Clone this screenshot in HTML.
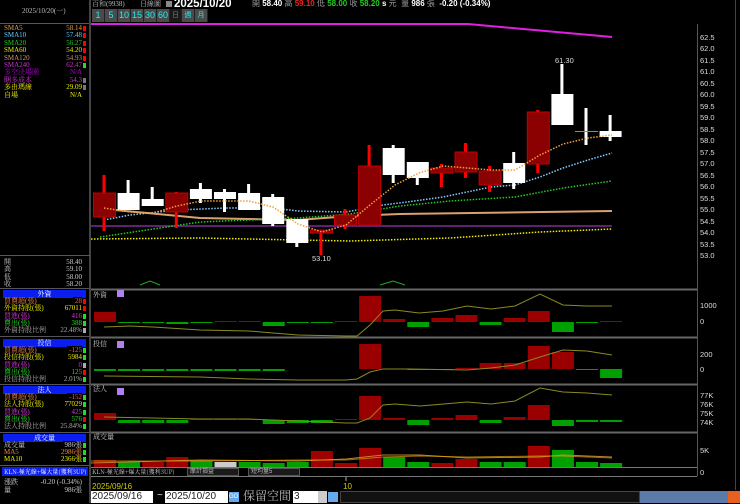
<!DOCTYPE html>
<html><head><meta charset="utf-8"><style>
*{margin:0;padding:0;box-sizing:border-box}
body{width:740px;height:503px;background:#000;overflow:hidden;position:relative;font-family:"Liberation Sans","Noto Sans CJK TC",sans-serif;font-size:8px;color:#ddd}
.a{position:absolute;white-space:nowrap;line-height:1}
.s{font-family:"Liberation Serif","Noto Serif CJK SC",serif;font-size:8px}
.hd{position:absolute;left:3px;width:83px;height:8px;background:#0a1ef0;color:#fff;text-align:center;font-size:7px;line-height:8px;font-family:"Noto Serif CJK SC",serif;overflow:hidden}
.row{position:absolute;left:4px;width:82px;height:8px;font-size:7px;line-height:8px;font-family:"Liberation Serif","Noto Serif CJK SC",serif;overflow:hidden}
.row b{font-weight:normal;position:absolute;right:4px;background:#000;padding-left:2px}
.row i{font-style:normal;position:absolute;right:0;width:3px;height:5px;top:2px}
.btn{position:absolute;top:9px;height:13px;background:#4a4a4a;color:#2ee;font-size:9px;text-align:center;line-height:13px;border-right:1px solid #222}
</style></head><body>
<div class="a s" style="left:22px;top:8px;color:#bbb;font-size:7px">2025/10/20(一)</div>
<div class="a" style="left:0;top:23px;width:90px;height:1px;background:#555"></div>
<div class="a" style="left:89px;top:0;width:2px;height:503px;background:#444"></div>
<div class="row" style="top:24px;color:#e8a040">SMA5<b>58.14</b><i style="background:#f00"></i></div>
<div class="row" style="top:31px;color:#6cf">SMA10<b>57.48</b><i style="background:#f00"></i></div>
<div class="row" style="top:39px;color:#2c2">SMA20<b>56.27</b><i style="background:#f00"></i></div>
<div class="row" style="top:46px;color:#ee0">SMA60<b>54.20</b><i style="background:#f00"></i></div>
<div class="row" style="top:54px;color:#c96">SMA120<b>54.93</b><i style="background:#f00"></i></div>
<div class="row" style="top:61px;color:#c3c">SMA240<b>62.47</b><i style="background:#2d2"></i></div>
<div class="row" style="top:68px;color:#a0c">多空決場園<b>N/A</b></div>
<div class="row" style="top:76px;color:#c3c">睏多成本<b>54.3</b><i style="background:#777"></i></div>
<div class="row" style="top:83px;color:#ee0">多由瑪線<b>29.09</b><i style="background:#777"></i></div>
<div class="row" style="top:91px;color:#ee0">自場<b>N/A</b></div>
<div class="a" style="left:0;top:255px;width:90px;height:1px;background:#555"></div>
<div class="row" style="top:258px;color:#ccc">開<b>58.40</b></div>
<div class="row" style="top:265px;color:#ccc">高<b>59.10</b></div>
<div class="row" style="top:273px;color:#ccc">低<b>58.00</b></div>
<div class="row" style="top:280px;color:#ccc">收<b>58.20</b></div>
<div class="a" style="left:0;top:288px;width:90px;height:1px;background:#555"></div>
<div class="hd" style="top:290px">外資</div>
<div class="row" style="top:297px;color:#e84">買賣超(張)<b style="color:#f55">28</b><i style="background:#f00"></i></div>
<div class="row" style="top:304px;color:#ee0">外資持股(張)<b>67011</b><i style="background:#f00"></i></div>
<div class="row" style="top:312px;color:#d3d">買進(張)<b>416</b><i style="background:#2d2"></i></div>
<div class="row" style="top:319px;color:#2d2">賣出(張)<b>388</b><i style="background:#2d2"></i></div>
<div class="row" style="top:326px;color:#aaa">外資持股比例<b>22.48%</b><i style="background:#aaa"></i></div>
<div class="a" style="left:0;top:336px;width:90px;height:1px;background:#555"></div>
<div class="hd" style="top:339px">投信</div>
<div class="row" style="top:346px;color:#e84">買賣超(張)<b style="color:#f55">-125</b><i style="background:#2d2"></i></div>
<div class="row" style="top:353px;color:#ee0">投信持股(張)<b>5984</b><i style="background:#2d2"></i></div>
<div class="row" style="top:361px;color:#d3d">買進(張)<b>0</b><i style="background:#aaa"></i></div>
<div class="row" style="top:368px;color:#2d2">賣出(張)<b>125</b><i style="background:#f00"></i></div>
<div class="row" style="top:375px;color:#aaa">投信持股比例<b>2.01%</b><i style="background:#2d2"></i></div>
<div class="a" style="left:0;top:384px;width:90px;height:1px;background:#555"></div>
<div class="hd" style="top:386px">法人</div>
<div class="row" style="top:393px;color:#e84">買賣超(張)<b style="color:#f55">-152</b><i style="background:#2d2"></i></div>
<div class="row" style="top:400px;color:#ee0">法人持股(張)<b>77029</b><i style="background:#2d2"></i></div>
<div class="row" style="top:408px;color:#d3d">買進(張)<b>425</b><i style="background:#2d2"></i></div>
<div class="row" style="top:415px;color:#2d2">賣出(張)<b>576</b><i style="background:#f00"></i></div>
<div class="row" style="top:422px;color:#aaa">法人持股比例<b>25.84%</b><i style="background:#2d2"></i></div>
<div class="a" style="left:0;top:432px;width:90px;height:1px;background:#555"></div>
<div class="hd" style="top:434px">成交量</div>
<div class="row" style="top:441px;color:#ccc">成交量<b>986張</b><i style="background:#2d2"></i></div>
<div class="row" style="top:448px;color:#e84">MA5<b style="color:#e84">2986張</b><i style="background:#2d2"></i></div>
<div class="row" style="top:455px;color:#ee0">MA10<b style="color:#ee0">2366張</b><i style="background:#2d2"></i></div>
<div class="a" style="left:0;top:465px;width:90px;height:1px;background:#555"></div>
<div class="a" style="left:2px;top:467px;width:86px;height:9px;background:#0a1ef0;color:#fff;font-size:6px;line-height:9px;font-family:'Noto Serif CJK SC',serif;padding-left:2px;overflow:hidden">KLN-極光線+爆大量(獲利3UP)</div>
<div class="row" style="top:478px;color:#ccc">漲跌<b>-0.20 (-0.34%)</b></div>
<div class="row" style="top:486px;color:#ccc">量<b>986張</b></div>

<div class="a s" style="left:92px;top:1px;color:#bbb;font-size:7px">百和(9938)</div>
<div class="a s" style="left:140px;top:1px;color:#bbb;font-size:7px">日線圖</div>
<div class="a" style="left:166px;top:1px;width:6px;height:6px;background:#888"></div>
<div class="a" style="left:174px;top:-1px;color:#fff;font-weight:bold;font-size:11.5px">2025/10/20</div>
<div class="a" style="left:252px;top:0;font-size:8px;font-weight:bold;color:#fff"><span style="color:#999;font-weight:normal">開</span> 58.40 <span style="color:#999;font-weight:normal">高</span> <span style="color:#e22">59.10</span> <span style="color:#999;font-weight:normal">低</span> <span style="color:#2c2">58.00</span> <span style="color:#999;font-weight:normal">收</span> <span style="color:#2c2">58.20</span> s <span style="color:#999;font-weight:normal">元 &nbsp;量</span> 986 <span style="color:#999;font-weight:normal">張</span> &nbsp;-0.20 (-0.34%)</div>
<div class="btn" style="left:92px;width:13px">1</div>
<div class="btn" style="left:105px;width:13px">5</div>
<div class="btn" style="left:118px;width:13px">10</div>
<div class="btn" style="left:131px;width:13px">15</div>
<div class="btn" style="left:144px;width:13px">30</div>
<div class="btn" style="left:157px;width:13px">60</div>
<div class="btn" style="left:170px;width:12px;background:#1a1a1a;color:#777;font-size:7px">日</div>
<div class="btn" style="left:182px;width:13px;font-size:7px">週</div>
<div class="btn" style="left:195px;width:13px;font-size:7px">月</div>

<svg class="a" style="left:0;top:0" width="740" height="503" id="sv">
<g stroke="#555" stroke-width="1" fill="none">
<line x1="697.5" y1="24" x2="697.5" y2="476"/>
<line x1="91" y1="289.5" x2="697" y2="289.5" stroke="#666" stroke-width="2"/>
<line x1="91" y1="337.5" x2="697" y2="337.5" stroke="#666" stroke-width="2"/>
<line x1="91" y1="384.5" x2="697" y2="384.5" stroke="#666" stroke-width="2"/>
<line x1="91" y1="432.5" x2="697" y2="432.5" stroke="#666" stroke-width="2"/>
<line x1="91" y1="467.5" x2="697" y2="467.5" stroke="#777"/>
<line x1="91" y1="476.5" x2="697" y2="476.5" stroke="#777"/>
</g>
<line x1="735.5" y1="0" x2="735.5" y2="490" stroke="#444"/>
<g font-size="7.5" fill="#ddd" font-family="Liberation Sans,sans-serif">
<text x="700" y="40">62.5</text><text x="700" y="51">62.0</text><text x="700" y="63">61.5</text><text x="700" y="74">61.0</text><text x="700" y="86">60.5</text><text x="700" y="97">60.0</text><text x="700" y="109">59.5</text><text x="700" y="120">59.0</text><text x="700" y="132">58.5</text><text x="700" y="143">58.0</text><text x="700" y="155">57.5</text><text x="700" y="166">57.0</text><text x="700" y="178">56.5</text><text x="700" y="189">56.0</text><text x="700" y="201">55.5</text><text x="700" y="212">55.0</text><text x="700" y="224">54.5</text><text x="700" y="235">54.0</text><text x="700" y="247">53.5</text><text x="700" y="258">53.0</text>
<text x="700" y="308">1000</text><text x="700" y="324">0</text>
<text x="700" y="357">200</text><text x="700" y="372">0</text>
<text x="700" y="398">77K</text><text x="700" y="407">76K</text><text x="700" y="416">75K</text><text x="700" y="425">74K</text>
<text x="700" y="453">5K</text><text x="700" y="475">0</text>
<text x="555" y="63">61.30</text>
<text x="312" y="261">53.10</text>
</g>
<g font-size="7" fill="#ccc" font-family="Noto Serif CJK SC,serif">
<text x="93" y="297">外資</text><text x="93" y="346">投信</text><text x="93" y="391">法人</text><text x="93" y="439">成交量</text>
</g>
<rect x="117" y="290" width="7" height="7" fill="#b080f0"/><rect x="117" y="341" width="7" height="7" fill="#b080f0"/><rect x="117" y="388" width="7" height="7" fill="#b080f0"/>
<polyline points="91,24 468,24 612,37" stroke="#e020e0" stroke-width="2" fill="none"/>
<line x1="91" y1="226" x2="612" y2="226" stroke="#602070" stroke-width="2"/>
<polyline points="91,239 200,238 298,240 350,241 450,238 540,232 612,229" stroke="#ee0" stroke-width="1.5" stroke-dasharray="1.5,1.5" fill="none"/>
<polyline points="104,209 200,218 298,220 350,216 400,214 612,211" stroke="#d9a070" stroke-width="2" fill="none"/>
<polyline points="100,237 200,222 298,218 350,214 400,206 450,201 515,197 563,188 612,181" stroke="#2c2" stroke-width="1.5" stroke-dasharray="1.5,1.5" fill="none"/>
<polyline points="104,220 130,215 177,210 225,208 273,208 298,211 346,212 383,205 407,202 443,197 491,187 515,185 540,177 563,168 588,160 612,153" stroke="#8cf" stroke-width="1.5" stroke-dasharray="1.5,1.5" fill="none"/>
<g id="cd"></g>
<polyline points="104,208 130,212 153,213 177,206 201,201 225,201 249,201 273,207 298,224 322,232 346,225 370,205 395,185 419,173 443,166 467,168 491,170 515,170 540,155 563,144 588,138 612,135" stroke="#f0a040" stroke-width="1.5" stroke-dasharray="1.5,1.5" fill="none"/>
<polyline points="140,285 150,281 160,285" stroke="#2a2" fill="none"/><polyline points="380,285 393,281 405,285" stroke="#2a2" fill="none"/>
<g id="bars"></g>
<polyline points="104,327 130,326 153,327 200,330 249,331 273,333 298,335 346,336 357,336 370,325 383,311 395,310 419,313 443,311 467,306 491,309 515,306 540,294 563,305 587,306 612,306" stroke="#8a8a20" fill="none"/>
<polyline points="104,376 200,377 249,379 298,380 346,380 357,379 370,372 383,369 410,369 467,370 491,368 515,365 540,357 563,350 587,351 612,355" stroke="#8a8a20" fill="none"/>
<polyline points="104,417 153,418 200,419 249,419 298,421 346,423 357,423 370,418 383,405 395,404 420,406 467,402 491,404 515,401 540,388 563,392 587,393 612,395" stroke="#8a8a20" fill="none"/>
<polyline points="91,463 200,460 298,461 346,459 383,455 420,455 467,458 540,457 563,455 612,457" stroke="#c08030" fill="none"/>
<polyline points="91,461 200,461 298,460 346,460 383,457 420,456 467,457 540,456 563,456 612,458" stroke="#e0a000" fill="none" opacity=".7"/>
<line x1="346" y1="477" x2="346" y2="481" stroke="#aaa"/>
<text x="92" y="489" font-size="8" fill="#cc0">2025/09/16</text><text x="343" y="489" font-size="8" fill="#cc0">10</text>
</svg>
<div class="a" style="left:92px;top:468px;width:92px;height:8px;color:#ccc;font-size:6px;line-height:8px;font-family:'Noto Serif CJK SC',serif;overflow:hidden">KLN-極光線+爆大量(獲利3UP)</div>
<div class="a" style="left:187px;top:468px;width:52px;height:8px;background:#1a1a1a;border:1px solid #555;color:#bbb;font-size:6px;padding-left:2px">摩計損益</div>
<div class="a" style="left:248px;top:468px;width:52px;height:8px;background:#1a1a1a;border:1px solid #555;color:#bbb;font-size:6px;padding-left:2px">短均量5</div>
<div class="a" style="left:91px;top:491px;width:62px;height:12px;background:#fff;color:#222;font-size:10px;line-height:12px;padding-left:1px">2025/09/16</div>
<div class="a" style="left:157px;top:491px;color:#ddd;font-size:10px">~</div>
<div class="a" style="left:165px;top:491px;width:63px;height:12px;background:#fff;color:#222;font-size:10px;line-height:12px;padding-left:1px">2025/10/20</div>
<div class="a" style="left:229px;top:492px;width:10px;height:10px;background:#6ae;color:#fff;font-size:6px;line-height:10px">GO</div>
<div class="a" style="left:243px;top:490px;color:#bbb;font-size:12px;font-family:'Noto Serif CJK SC',serif">保留空間</div>
<div class="a" style="left:293px;top:491px;width:25px;height:12px;background:#fff;color:#222;font-size:10px;line-height:12px;padding-left:1px">3</div>
<div class="a" style="left:318px;top:491px;width:9px;height:12px;background:#ccc"></div>
<div class="a" style="left:328px;top:492px;width:10px;height:10px;background:#6ae"></div>
<div class="a" style="left:340px;top:491px;width:300px;height:12px;background:#111;border:1px solid #444"></div>
<div class="a" style="left:640px;top:491px;width:100px;height:12px;background:#5a7aa8"></div>
<div class="a" style="left:728px;top:491px;width:12px;height:12px;background:#e86020"></div>
<script>
var ns="http://www.w3.org/2000/svg";
function R(p,x,y,w,h,f,s){var r=document.createElementNS(ns,"rect");r.setAttribute("x",x);r.setAttribute("y",y);r.setAttribute("width",w);r.setAttribute("height",Math.max(h,1));r.setAttribute("fill",f);if(s)r.setAttribute("stroke",s);p.appendChild(r);}
var cd=document.getElementById("cd");
var C=[["r",193,217,175,231],["w",193,210,180,210],["w",199,206,187,206],["r",193,212,192,228],["w",189,199,183,203],["w",192,199,189,212],["w",193,210,184,210],["w",197,224,194,226],["w",219,243,219,247],["r",230,233,230,255],["r",215,225,209,229],["r",166,225,145,225],["w",148,175,145,183],["w",162,178,162,185],["r",168,173,164,187],["r",152,172,143,178],["r",171,185,166,192],["w",163,183,152,189],["r",112,164,110,173],["w",94,125,64,125],["x",131,132,108,145],["w",131,137,115,141]];
C.forEach(function(c,i){var x0=93+24.1*i,cx=x0+11;
 if(c[0]=="r"){R(cd,cx-1.5,c[3],3,c[4]-c[3],"#f00");R(cd,x0+.5,c[1],22,c[2]-c[1],"#8b0000","#c00000");}
 else if(c[0]=="w"){R(cd,cx-1.5,c[3],3,c[4]-c[3],"#fff");R(cd,x0+.5,c[1],22,c[2]-c[1],"#fff");}
 else{R(cd,cx-1.5,c[3],3,c[4]-c[3],"#fff");R(cd,x0,c[1],23,1,"#888");}
});
var b=document.getElementById("bars");
function P(base,arr){arr.forEach(function(v,i){if(v===null)return;var x0=94+24.1*i;var g=v[0]=="g",gr=v[0]=="k";var h=v[1];var col=g?"#00a000":gr?"#ccc":"#9a0000";if(g||gr)R(b,x0,base,22,h,col);else R(b,x0,base-h,22,h,col);});}
P(322,[["r",10],["g",1],["g",1],["g",2],["g",1],["r",1],["r",1],["g",4],["g",1],["g",1],["r",1],["r",26],["r",3],["g",5],["r",4],["r",7],["g",3],["r",4],["r",11],["g",10],["g",1],["r",1]]);
P(369,[["g",2],["g",2],["g",2],["g",2],["g",2],["g",2],["g",2],["g",2],null,null,null,["r",25],null,["g",1],["g",1],["r",1],["r",6],["r",6],["r",23],["r",17],["g",1],["g",9]]);
P(420,[["r",7],["g",3],["g",3],["g",3],["r",1],["r",1],["r",1],["g",4],["g",3],["g",3],["r",1],["r",24],["r",2],["g",5],["r",2],["r",5],["g",3],["r",3],["r",15],["g",6],["g",2],["g",2]]);
var V=[["r",7],["g",5],["r",5],["r",10],["g",6],["k",5],["g",5],["g",4],["g",5],["r",16],["r",4],["r",19],["g",10],["g",5],["r",4],["r",8],["g",5],["g",5],["r",21],["g",17],["g",5],["g",4]];
V.forEach(function(v,i){var x0=94+24.1*i,h=v[1],col=v[0]=="g"?"#00a000":v[0]=="k"?"#ccc":"#a00000";R(b,x0,467-h,22,h,col);});
</script>
</body></html>
